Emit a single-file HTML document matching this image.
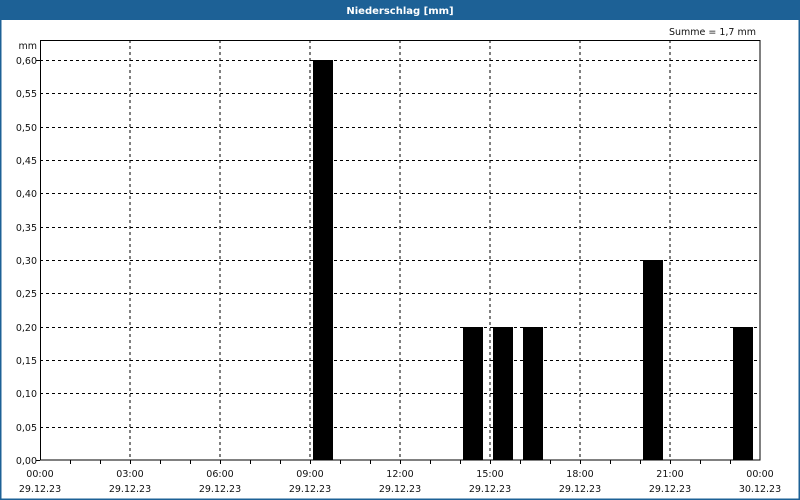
<!DOCTYPE html>
<html><head><style>
html,body{margin:0;padding:0;background:#fff}
svg{display:block}
text{font-family:"DejaVu Sans","Liberation Sans",sans-serif;font-size:9.5px;fill:#111}
</style></head><body>
<svg width="800" height="500" viewBox="0 0 800 500">
<rect x="0" y="0" width="800" height="500" fill="#fff"/>
<rect x="0.75" y="0.75" width="798.5" height="498.5" fill="none" stroke="#1d6196" stroke-width="1.5"/>
<rect x="0" y="0" width="800" height="20" fill="#1d6196"/>
<text x="400" y="14" text-anchor="middle" style="fill:#fff;font-weight:bold;font-size:10px">Niederschlag [mm]</text>
<text x="756" y="35" text-anchor="end">Summe = 1,7 mm</text>
<text x="37" y="49" text-anchor="end">mm</text>
<g stroke="#000" stroke-width="1" stroke-dasharray="3,3" fill="none">
<path d="M130 40V460M220 40V460M310 40V460M400 40V460M490 40V460M580 40V460M670 40V460"/>
<path d="M40 60.5H760M40 93.5H760M40 127.5H760M40 160.5H760M40 193.5H760M40 227.5H760M40 260.5H760M40 293.5H760M40 327.5H760M40 360.5H760M40 393.5H760M40 427.5H760"/>
</g>
<g fill="#000">
<rect x="313" y="60" width="20" height="400"/>
<rect x="463" y="327" width="20" height="133"/>
<rect x="493" y="327" width="20" height="133"/>
<rect x="523" y="327" width="20" height="133"/>
<rect x="643" y="260" width="20" height="200"/>
<rect x="733" y="327" width="20" height="133"/>
</g>
<rect x="40.5" y="40.5" width="719.5" height="419.5" fill="none" stroke="#000" stroke-width="1"/>
<path stroke="#000" stroke-width="1" d="M70.5 460V464M100.5 460V464M130.5 460V464M160.5 460V464M190.5 460V464M220.5 460V464M250.5 460V464M280.5 460V464M310.5 460V464M340.5 460V464M370.5 460V464M400.5 460V464M430.5 460V464M460.5 460V464M490.5 460V464M520.5 460V464M550.5 460V464M580.5 460V464M610.5 460V464M640.5 460V464M670.5 460V464M700.5 460V464M730.5 460V464M36 460.5H40M36 60.5H40"/>
<g text-anchor="end">
<text x="37" y="64">0,60</text><text x="37" y="97">0,55</text><text x="37" y="131">0,50</text>
<text x="37" y="164">0,45</text><text x="37" y="197">0,40</text><text x="37" y="231">0,35</text>
<text x="37" y="264">0,30</text><text x="37" y="297">0,25</text><text x="37" y="331">0,20</text>
<text x="37" y="364">0,15</text><text x="37" y="397">0,10</text><text x="37" y="431">0,05</text>
<text x="37" y="464">0,00</text>
</g>
<g text-anchor="middle">
<text x="40" y="477">00:00</text><text x="40" y="492">29.12.23</text>
<text x="130" y="477">03:00</text><text x="130" y="492">29.12.23</text>
<text x="220" y="477">06:00</text><text x="220" y="492">29.12.23</text>
<text x="310" y="477">09:00</text><text x="310" y="492">29.12.23</text>
<text x="400" y="477">12:00</text><text x="400" y="492">29.12.23</text>
<text x="490" y="477">15:00</text><text x="490" y="492">29.12.23</text>
<text x="580" y="477">18:00</text><text x="580" y="492">29.12.23</text>
<text x="670" y="477">21:00</text><text x="670" y="492">29.12.23</text>
<text x="760" y="477">00:00</text><text x="760" y="492">30.12.23</text>
</g>
</svg>
</body></html>
